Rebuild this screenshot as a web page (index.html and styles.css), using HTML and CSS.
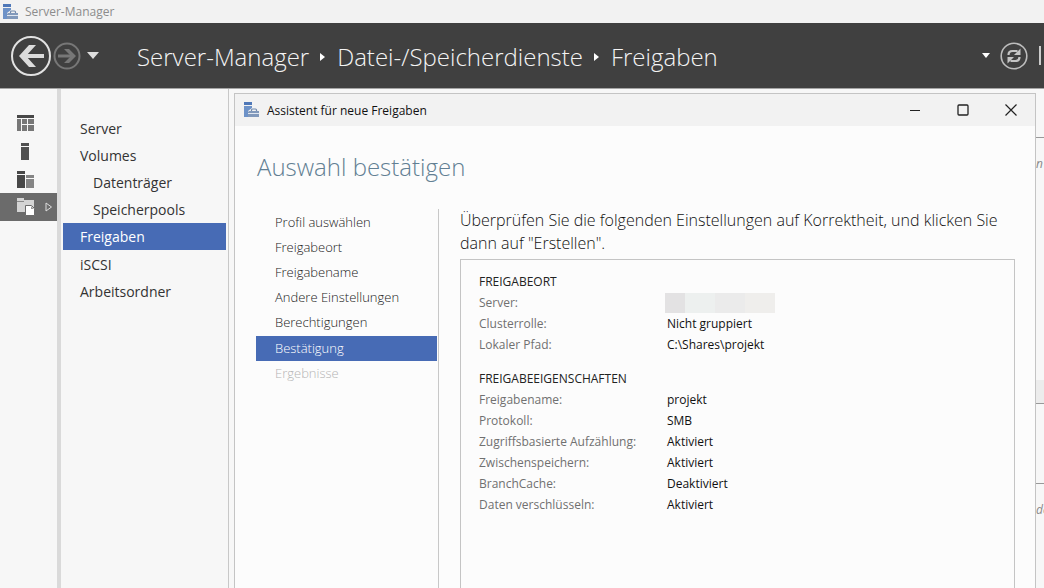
FILE: index.html
```html
<!DOCTYPE html>
<html lang="de">
<head>
<meta charset="utf-8">
<title>Server-Manager</title>
<link rel="stylesheet" href="styles.css">
</head>
<body>
<svg class="defs" aria-hidden="true">
  <symbol id="app" viewBox="0 0 16 16">
    <path fill="#4f78b8" d="M0 0h8v3H0z"/>
    <path fill="#6d92c8" d="M0 4h8v2l-4 3v6H0z"/>
    <path fill="none" stroke="#7189ab" stroke-width="1.2" d="M7.500 9V8q0-1 1-1h3q1 0 1 1v1"/>
    <path fill="#8199bb" d="M5 9h10v6H4v-5z"/>
    <path stroke="#dfe6f0" d="M4 11.500h11"/>
  </symbol>
</svg>
<header class="titlebar">
  <svg class="app-icon"><use href="#app"/></svg>
  <span>Server-Manager</span>
</header>
<div class="toolbar">
  <button class="tool" aria-label="Zurück"><svg width="40" height="40" viewBox="0 0 40 40"><circle cx="20" cy="20" r="19" fill="none" stroke="#e2e2e2" stroke-width="2"/><path fill="none" stroke="#dcdcdc" stroke-width="4" d="M33 20H11"/><path fill="#dcdcdc" d="M18 9h7L15 20l10 11h-7L8 20z"/></svg></button>
  <button class="tool" aria-label="Vorwärts"><svg width="28" height="28" viewBox="0 0 28 28"><circle cx="14" cy="14" r="12.500" fill="none" stroke="#777" stroke-width="2"/><path fill="none" stroke="#777" stroke-width="3" d="M5 14h15"/><path fill="#777" d="M11 7h5l7 7-7 7h-5l7-7z"/></svg></button>
  <button class="tool history" aria-label="Verlauf"><svg width="12" height="7" viewBox="0 0 12 7"><path fill="#dedede" d="M0 0h12L6 7z"/></svg></button>
  <nav class="crumbs" aria-label="Pfad">
    <a href="#">Server-Manager</a>
    <svg width="6" height="8" viewBox="0 0 6 8"><path fill="#fff" d="M0 0l5 4-5 4z"/></svg>
    <a href="#">Datei-/Speicherdienste</a>
    <svg width="6" height="8" viewBox="0 0 6 8"><path fill="#fff" d="M0 0l5 4-5 4z"/></svg>
    <a href="#">Freigaben</a>
  </nav>
  <button class="tool menu" aria-label="Optionen"><svg width="8" height="5" viewBox="0 0 8 5"><path fill="#fff" d="M0 0h8L4 5z"/></svg></button>
  <button class="tool" aria-label="Aktualisieren"><svg width="28" height="28" viewBox="0 0 28 28"><circle cx="14" cy="14" r="12.800" fill="none" stroke="#bdbdbd" stroke-width="1.600"/><path fill="none" stroke="#c4c4c4" stroke-width="2.200" d="M8.500 13q0-4 4-4h5M19.500 15q0 4-4 4h-5"/><path fill="#c4c4c4" d="M20.500 6.500V13H14zM7.500 21.500V15H14z"/></svg></button>
  <span class="bar"></span>
</div>
<div class="workspace">
  <nav class="rail" aria-label="Bereiche">
    <button aria-label="Dashboard"><svg width="18" height="17" viewBox="0 0 18 17"><path fill="#484848" d="M0 0h17v3H0z"/><path fill="#777" d="M0 4h4v12H0zM5 4h5v5H5zM11 4h6v5h-6zM5 10h5v6H5zM11 10h6v6h-6z"/></svg></button>
    <button aria-label="Lokaler Server"><svg width="18" height="17" viewBox="0 0 18 17"><path fill="#505050" d="M4 0h8v3H4zM4 4h8v13H4z"/></svg></button>
    <button aria-label="Alle Server"><svg width="18" height="17" viewBox="0 0 18 17"><path fill="#484848" d="M0 0h8v3H0zM0 4h8v13H0z"/><path fill="#858585" d="M9 4h8v3H9zM9 8h8v9H9z"/></svg></button>
    <button class="current" aria-label="Datei-/Speicherdienste"><svg width="18" height="18" viewBox="0 0 18 18"><path fill="#d4d4d4" d="M0 0h7v2h10v12H0z"/><path stroke="#8a8a8a" d="M0 3.500h7"/><path fill="#fff" stroke="#6b6b6b" d="M8.500 7.500h6l3 3v7h-9z"/><path fill="#999" d="M14 8v3h3z"/></svg><svg class="open" width="8" height="10" viewBox="0 0 8 10"><path fill="none" stroke="#ddd" d="M1 1l5.500 4L1 9z"/></svg></button>
  </nav>
  <nav class="side" aria-label="Speicherdienste">
    <a href="#">Server</a>
    <a href="#">Volumes</a>
    <a class="sub" href="#">Datenträger</a>
    <a class="sub" href="#">Speicherpools</a>
    <a class="current" href="#">Freigaben</a>
    <a href="#">iSCSI</a>
    <a href="#">Arbeitsordner</a>
  </nav>
  <section class="dialog" role="dialog" aria-labelledby="dialog-title">
    <header class="dialog-bar">
      <svg class="app-icon"><use href="#app"/></svg>
      <span id="dialog-title">Assistent für neue Freigaben</span>
      <button aria-label="Minimieren"><svg width="12" height="12" viewBox="0 0 12 12"><path stroke="#222" d="M1 6.500h10"/></svg></button>
      <button aria-label="Maximieren"><svg width="12" height="12" viewBox="0 0 12 12"><rect x="1" y="1" width="10" height="10" rx="1" fill="none" stroke="#222" stroke-width="1.300"/></svg></button>
      <button aria-label="Schließen"><svg width="12" height="12" viewBox="0 0 12 12"><path stroke="#222" stroke-width="1.200" d="M.5.500l11 11M11.500.500l-11 11"/></svg></button>
    </header>
    <h1>Auswahl bestätigen</h1>
    <div class="wizard">
      <ol class="steps">
        <li>Profil auswählen</li>
        <li>Freigabeort</li>
        <li>Freigabename</li>
        <li>Andere Einstellungen</li>
        <li>Berechtigungen</li>
        <li class="current" aria-current="step">Bestätigung</li>
        <li class="off">Ergebnisse</li>
      </ol>
      <div class="page">
        <p>Überprüfen Sie die folgenden Einstellungen auf Korrektheit, und klicken Sie dann auf "Erstellen".</p>
        <div class="summary">
          <table>
            <caption>FREIGABEORT</caption>
            <tr><th scope="row">Server:</th><td><span class="redacted"><i></i><i></i><i></i><i></i></span></td></tr>
            <tr><th scope="row">Clusterrolle:</th><td>Nicht gruppiert</td></tr>
            <tr><th scope="row">Lokaler Pfad:</th><td>C:\Shares\projekt</td></tr>
          </table>
          <table>
            <caption>FREIGABEEIGENSCHAFTEN</caption>
            <tr><th scope="row">Freigabename:</th><td>projekt</td></tr>
            <tr><th scope="row">Protokoll:</th><td>SMB</td></tr>
            <tr><th scope="row">Zugriffsbasierte Aufzählung:</th><td>Aktiviert</td></tr>
            <tr><th scope="row">Zwischenspeichern:</th><td>Aktiviert</td></tr>
            <tr><th scope="row">BranchCache:</th><td>Deaktiviert</td></tr>
            <tr><th scope="row">Daten verschlüsseln:</th><td>Aktiviert</td></tr>
          </table>
        </div>
      </div>
    </div>
  </section>
  <div class="behind">
    <div class="tile-head"></div>
    <div class="tile-text">n</div>
    <div class="tile-foot"></div>
    <div class="tile-gap"></div>
    <div class="tile-text">de</div>
  </div>
</div>
</body>
</html>
```
FILE: styles.css
```css
* { box-sizing: border-box; }
body {
  margin: 0;
  height: 100vh;
  overflow: hidden;
  display: flex;
  flex-direction: column;
  background: #f7f7f7;
  color: #333;
  font-family: "Open Sans", "Noto Sans", sans-serif;
  font-size: 12px;
}
a { color: inherit; text-decoration: none; }
button { border: 0; padding: 0; background: none; font: inherit; display: flex; align-items: center; justify-content: center; }
svg { display: block; flex: none; }
.defs { display: none; }
.app-icon { width: 16px; height: 16px; }

.titlebar { height: 23px; flex: none; display: flex; align-items: center; gap: 6px; padding-left: 3px; background: #f2f2f2; color: #8c8c8c; }

.toolbar { height: 66px; flex: none; display: flex; align-items: center; padding: 0 3px 0 11px; background: #404040; border-bottom: 1px solid #a5a5a5; }
.tool + .tool { margin-left: 2px; }
.tool.history { margin-left: 6px; }
.crumbs { flex: 1; display: flex; align-items: center; gap: 11px; padding: 2px 0 0 38px; color: #f4f4f4; font-size: 24px; font-weight: 300; line-height: 32px; white-space: nowrap; }
.menu + .tool { margin-left: 10px; }
.bar { width: 2px; height: 19px; margin-left: 11px; background: #ccc; }

.workspace { flex: 1; min-height: 0; display: grid; grid-template-columns: 61px 168px minmax(0, 1fr) 8px; }
.rail { padding-top: 20px; border-right: 4px solid #dadada; }
.rail button { width: 100%; height: 28px; padding-left: 17px; justify-content: flex-start; }
.rail .current { background: #6b6b6b; }
.open { margin-left: 10px; }

.side { padding: 26px 2px 0; border-right: 1px solid #c8c8c8; font-size: 14px; line-height: 27px; }
.side a { display: block; padding-left: 17px; }
.side .sub { padding-left: 30px; }
.side .current { background: #476bb5; color: #fff; margin-bottom: 1px; }

.dialog { margin: 4px 0 0 5px; border: 1px solid #c4c4c4; border-bottom: 0; background: #fcfcfc; display: flex; flex-direction: column; min-height: 0; }
.dialog-bar { height: 32px; flex: none; display: flex; align-items: center; padding: 0 18px 0 9px; gap: 7px; background: #f2f2f2; color: #111; }
.dialog-bar span { flex: 1; }
.dialog-bar button { width: 12px; height: 32px; }
.dialog-bar button + button { margin-left: 29px; }
h1 { margin: 23px 0 0 22px; color: #627f93; font-size: 24px; line-height: 36px; font-weight: 300; }

.wizard { flex: 1; min-height: 0; display: grid; grid-template-columns: 204px minmax(0, 1fr); margin-top: 24px; }
.steps { list-style: none; margin: 0; padding: 1px 1px 0 21px; border-right: 1px solid #c8c8c8; line-height: 25px; color: #222; font-size: 13px; font-weight: 300; }
.steps li { padding-left: 19px; }
.steps .current { margin-top: 1px; background: #476bb5; color: #fff; }
.steps .off { color: #b4b4b4; }

.page { display: flex; flex-direction: column; min-height: 0; padding: 0 20px 0 21px; }
.page p { margin: 0; font-size: 16px; font-weight: 300; line-height: 23px; color: #111; }
.summary { flex: 1; min-height: 0; margin-top: 4px; padding: 11px 18px 0; border: 1px solid #c4c4c4; border-bottom: 0; }
table { border-collapse: collapse; line-height: 21px; margin-bottom: 13px; }
caption { text-align: left; color: #222; white-space: nowrap; }
th, td { padding: 0; height: 21px; text-align: left; font-weight: 400; }
th { width: 188px; color: #707070; }
td { color: #111; }
.redacted { display: flex; width: 110px; height: 20px; margin-left: -2px; }
.redacted i { width: 30px; background: #ebebeb; }
.redacted i:first-child { width: 20px; background: #e3e2e3; }
.redacted i:nth-child(2) { background: #edf0ef; }
.redacted i:last-child { background: #efeeec; }

.behind { overflow: hidden; color: #8a8a8a; font-size: 12px; font-style: italic; line-height: 16px; }
.tile-head { height: 49px; border-bottom: 1px solid #999; }
.tile-text { padding-top: 18px; }
.tile-foot { height: 24px; margin-top: 208px; background: #ececec; border-bottom: 1px solid #999; }
.tile-gap { height: 80px; border-bottom: 1px solid #999; }
```
